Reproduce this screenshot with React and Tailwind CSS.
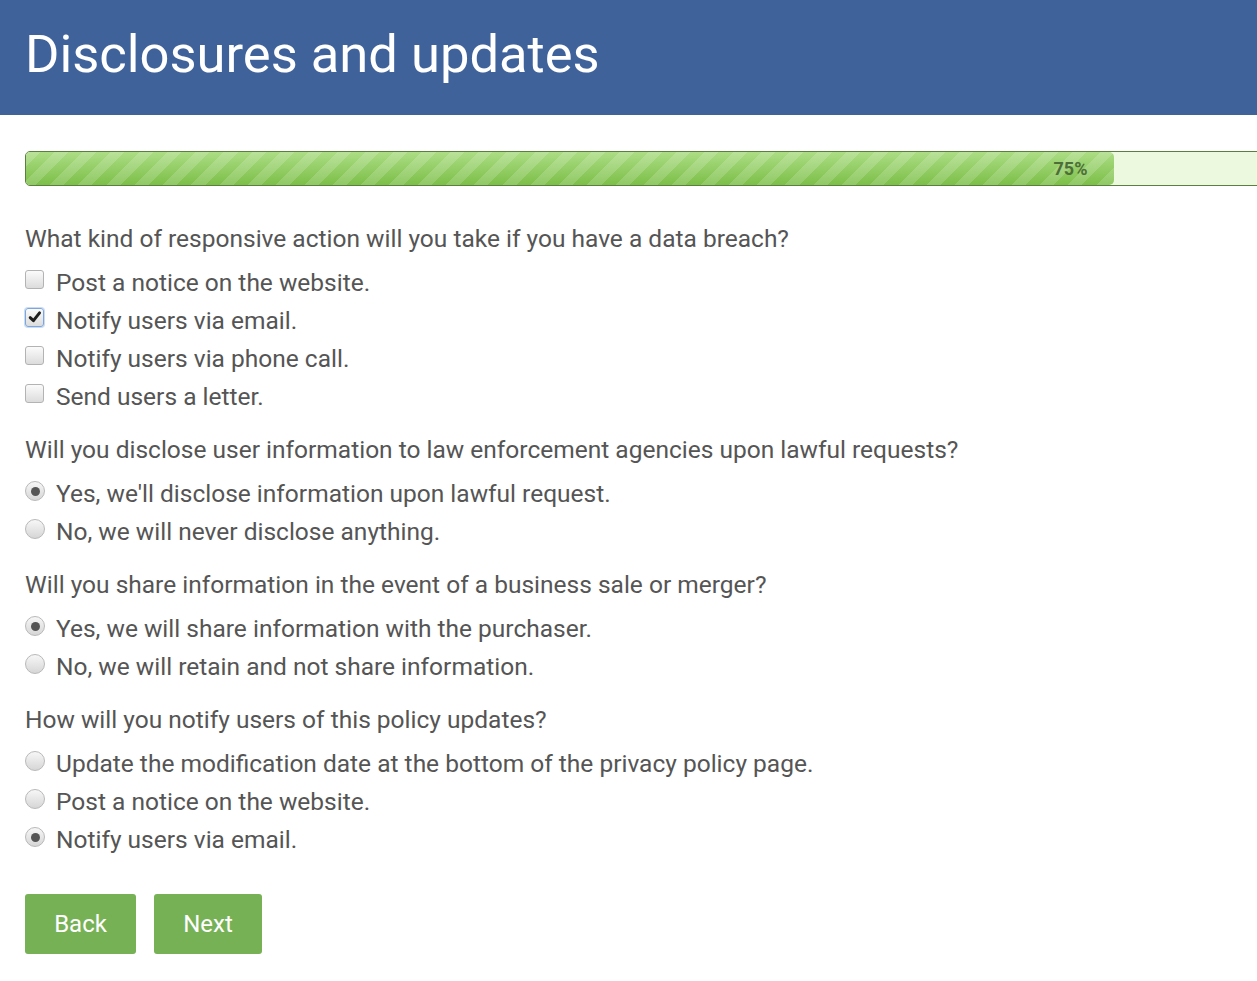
import { useState } from 'react'

const questions = [
  {
    id: 'breach',
    type: 'checkbox',
    text: 'What kind of responsive action will you take if you have a data breach?',
    options: [
      'Post a notice on the website.',
      'Notify users via email.',
      'Notify users via phone call.',
      'Send users a letter.',
    ],
    selected: [1],
  },
  {
    id: 'law',
    type: 'radio',
    text: 'Will you disclose user information to law enforcement agencies upon lawful requests?',
    options: ["Yes, we'll disclose information upon lawful request.", 'No, we will never disclose anything.'],
    selected: [0],
  },
  {
    id: 'sale',
    type: 'radio',
    text: 'Will you share information in the event of a business sale or merger?',
    options: ['Yes, we will share information with the purchaser.', 'No, we will retain and not share information.'],
    selected: [0],
  },
  {
    id: 'updates',
    type: 'radio',
    text: 'How will you notify users of this policy updates?',
    options: [
      'Update the modification date at the bottom of the privacy policy page.',
      'Post a notice on the website.',
      'Notify users via email.',
    ],
    selected: [2],
  },
]

function CheckBox({ checked }) {
  return (
    <span
      className={[
        'relative mr-[12px] inline-flex h-[19px] w-[19px] shrink-0 -translate-y-[4px] items-center justify-center rounded-[3px] border bg-[linear-gradient(#fbfbfb,#dcdcdc)]',
        checked ? 'border-[#7ea6dc] shadow-[0_0_0_1px_#c9dcf4]' : 'border-[#b3b3b3]',
      ].join(' ')}
      aria-hidden
    >
      {checked && (
        <svg viewBox="0 0 16 16" className="h-[14px] w-[14px]">
          <path d="M2.5 8.8 L6.2 12.2 L13.2 3.2" fill="none" stroke="#1e1e1e" strokeWidth="3.4" strokeLinecap="round" strokeLinejoin="round" />
        </svg>
      )}
    </span>
  )
}

function RadioDot({ checked }) {
  return (
    <span
      className="relative mr-[11px] inline-flex h-[20px] w-[20px] shrink-0 -translate-y-[3px] items-center justify-center rounded-full border border-[#b9b9b9] bg-[linear-gradient(#f7f7f7,#d6d6d6)]"
      aria-hidden
    >
      {checked && <span className="h-[9px] w-[9px] rounded-full bg-[#555]" />}
    </span>
  )
}

function Question({ q }) {
  const [sel, setSel] = useState(q.selected)
  const toggle = (i) => {
    if (q.type === 'radio') setSel([i])
    else setSel(sel.includes(i) ? sel.filter((s) => s !== i) : [...sel, i])
  }
  return (
    <fieldset className="mt-[16px] first:mt-0">
      <legend className="mb-[7px] block leading-[36px]">{q.text}</legend>
      {q.options.map((opt, i) => (
        <label key={opt} className="flex h-[38px] cursor-pointer items-center" onClick={() => toggle(i)}>
          {q.type === 'checkbox' ? <CheckBox checked={sel.includes(i)} /> : <RadioDot checked={sel.includes(i)} />}
          <span>{opt}</span>
        </label>
      ))}
    </fieldset>
  )
}

export default function App() {
  return (
    <div className="min-h-screen overflow-hidden bg-white font-['Roboto',sans-serif]">
      <header className="flex h-[115px] items-center bg-[#3f629b] px-[25px]">
        <h1 className="-translate-y-[3px] text-[52.5px] font-normal leading-none text-white">Disclosures and updates</h1>
      </header>

      <main className="px-[25px]">
        <div className="mt-[36px] flex h-[35px] w-[1452px] overflow-hidden rounded-l-[5px] border border-[#5b7f3f] bg-[#ecf9df]">
          <div className="flex w-3/4 items-center justify-end rounded-r-[5px] bg-[#8ccc59] bg-[repeating-linear-gradient(135deg,rgba(255,255,255,0.16)_0_10px,transparent_10px_20px),linear-gradient(#acdd85,#7cbf48)] pr-[26px]">
            <span className="text-[18px] font-bold text-[#4e6e38]">75%</span>
          </div>
        </div>

        <form className="mt-[35px] text-[24.5px] text-[#555]" onSubmit={(e) => e.preventDefault()}>
          {questions.map((q) => (
            <Question key={q.id} q={q} />
          ))}

          <div className="mt-[35px] flex gap-[18px]">
            <button type="button" className="h-[60px] w-[111px] rounded-[3px] bg-[#77b156] text-[24px] text-white">
              Back
            </button>
            <button type="submit" className="h-[60px] w-[108px] rounded-[3px] bg-[#77b156] text-[24px] text-white">
              Next
            </button>
          </div>
        </form>
      </main>
    </div>
  )
}
